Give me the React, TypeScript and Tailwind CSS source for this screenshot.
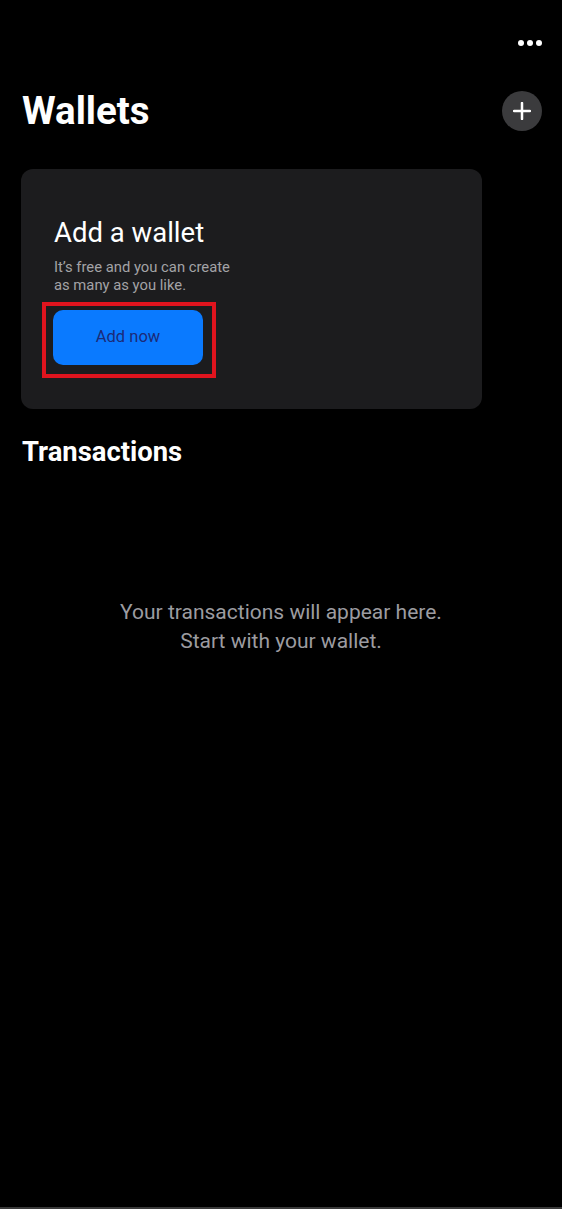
export default function App() {
  return (
    <div
      className="w-[562px] h-[1209px] bg-black flex flex-col overflow-hidden relative"
      style={{ fontFamily: 'Roboto, "Noto Sans", sans-serif' }}
    >
      <div className="flex justify-end pr-[20px] pt-[40px] h-[60px]">
        <div className="flex gap-[3px]">
          <span className="w-[6px] h-[6px] rounded-full bg-white" />
          <span className="w-[6px] h-[6px] rounded-full bg-white" />
          <span className="w-[6px] h-[6px] rounded-full bg-white" />
        </div>
      </div>
      <div className="flex items-start justify-between pl-[22px] pr-[20px] mt-[28px] h-[43px]">
        <h1 className="mt-[3px] text-white font-bold text-[38.5px] leading-[40px]">Wallets</h1>
        <button className="mt-[3px] w-[40px] h-[40px] rounded-full bg-[#3b3b3d] flex items-center justify-center">
          <svg width="18" height="18" viewBox="0 0 18 18">
            <path d="M9 1v16M1 9h16" stroke="white" strokeWidth="2.5" strokeLinecap="round" />
          </svg>
        </button>
      </div>
      <div className="ml-[21px] mt-[38px] w-[461px] h-[240px] rounded-[12px] bg-[#1c1c1e] pl-[33px] pt-[48px] flex flex-col">
        <h2 className="text-white text-[27.5px] leading-[32px]">Add a wallet</h2>
        <p className="text-[#a3a3a6] text-[14.8px] leading-[17.5px] mt-[10px]">
          It’s free and you can create
          <br />
          as many as you like.
        </p>
        <div className="mt-[8px] -ml-[12px] w-[174px] h-[76px] border-[4px] border-[#e0141e] flex items-start pl-[7px] pt-[4px]">
          <button className="w-[150px] h-[55px] rounded-[10px] bg-[#0a7aff] text-[#1c2a78] text-[16.5px]">
            Add now
          </button>
        </div>
      </div>
      <h2 className="text-white font-bold text-[27.4px] leading-[30px] pl-[22px] mt-[28px]">Transactions</h2>
      <p className="text-[#9c9ca0] text-[21px] leading-[29px] text-center mt-[131px]">
        Your transactions will appear here.
        <br />
        Start with your wallet.
      </p>
      <div className="absolute bottom-0 left-0 w-full h-[2px] bg-[#3a3a3a]" />
    </div>
  );
}
